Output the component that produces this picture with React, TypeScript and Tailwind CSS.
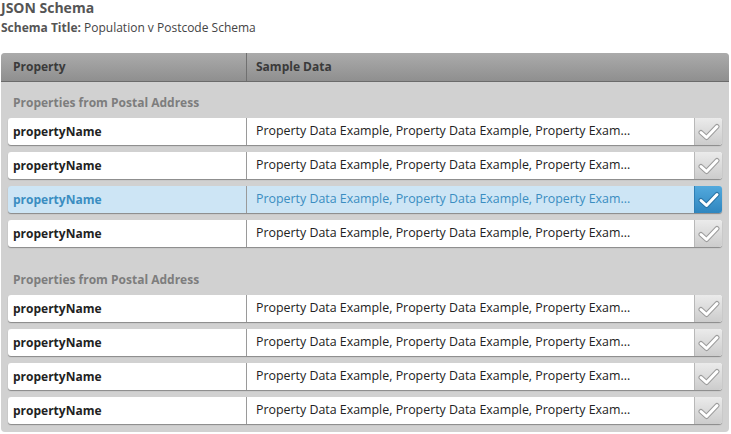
import React from "react";

type Row = { name: string; data: string; selected?: boolean };

const groups: { title: string; rows: Row[] }[] = [
  {
    title: "Properties from Postal Address",
    rows: [
      { name: "propertyName", data: "Property Data Example, Property Data Example, Property Exam..." },
      { name: "propertyName", data: "Property Data Example, Property Data Example, Property Exam..." },
      { name: "propertyName", data: "Property Data Example, Property Data Example, Property Exam...", selected: true },
      { name: "propertyName", data: "Property Data Example, Property Data Example, Property Exam..." },
    ],
  },
  {
    title: "Properties from Postal Address",
    rows: [
      { name: "propertyName", data: "Property Data Example, Property Data Example, Property Exam..." },
      { name: "propertyName", data: "Property Data Example, Property Data Example, Property Exam..." },
      { name: "propertyName", data: "Property Data Example, Property Data Example, Property Exam..." },
      { name: "propertyName", data: "Property Data Example, Property Data Example, Property Exam..." },
    ],
  },
];

function CheckMark({ selected }: { selected?: boolean }) {
  return (
    <svg width="22" height="18" viewBox="0 0 22 18">
      <polyline
        points="3,9.5 8.5,14.5 19,3.5"
        fill="none"
        stroke={selected ? "#2a74a6" : "#9c9c9c"}
        strokeWidth="5"
        strokeLinecap="round"
        strokeLinejoin="round"
      />
      <polyline
        points="3,9.5 8.5,14.5 19,3.5"
        fill="none"
        stroke="#ffffff"
        strokeWidth="3"
        strokeLinecap="round"
        strokeLinejoin="round"
      />
    </svg>
  );
}

export default function App() {
  return (
    <div className="w-[731px] h-[434px] bg-white font-['Open_Sans',sans-serif] overflow-hidden">
      {/* Heading */}
      <div className="pl-[1px]">
        <h1 className="text-[14px] leading-[16px] font-bold text-[#555555]">JSON Schema</h1>
        <p className="mt-[4px] text-[12px] leading-[16px] text-[#444444]">
          <span className="font-bold text-[#555555]">Schema Title:</span> Population v Postcode Schema
        </p>
      </div>

      {/* Table */}
      <div className="ml-[1px] mr-[2px] mt-[17px] rounded-[4px] overflow-hidden bg-[#d1d1d1]">
        <div className="flex h-[29px] bg-gradient-to-b from-[#ababab] to-[#8f8f8f] border-b border-[#6b6b6b] text-[12px] font-bold text-[#3a3a3a]">
          <div className="w-[246px] flex items-center pl-[12px] border-r border-[#707070]">Property</div>
          <div className="flex-1 flex items-center pl-[9px]">Sample Data</div>
        </div>

        <div className="px-[7px] pt-[12px] pb-[8px] flex flex-col gap-[24px]">
          {groups.map((g, gi) => (
            <div key={gi}>
              <div className="h-[18px] flex items-center pl-[5px] text-[12px] font-bold text-[#7d7d7d] mb-[6px]">
                {g.title}
              </div>
              <div className="flex flex-col gap-[7px]">
                {g.rows.map((r, ri) => (
                  <div
                    key={ri}
                    className={`flex h-[27px] rounded-[3px] overflow-hidden shadow-[0_1px_1px_rgba(0,0,0,0.35)] ${
                      r.selected ? "bg-[#cde5f5]" : "bg-white"
                    }`}
                  >
                    <div
                      className={`w-[239px] flex items-center pl-[5px] text-[12px] font-bold border-r border-[#9a9a9a] ${
                        r.selected ? "text-[#3a8dc1]" : "text-[#222222]"
                      }`}
                    >
                      {r.name}
                    </div>
                    <div
                      className={`flex-1 flex items-center pl-[9px] text-[12.4px] ${
                        r.selected ? "text-[#3a8dc1]" : "text-[#222222]"
                      }`}
                    >
                      {r.data}
                    </div>
                    <div
                      className={`w-[28px] flex items-center justify-center border-l ${
                        r.selected
                          ? "bg-gradient-to-b from-[#52a9dd] to-[#2f86bf] border-[#2f7fb4]"
                          : "bg-gradient-to-b from-[#ebebeb] to-[#cccccc] border-[#b8b8b8]"
                      }`}
                    >
                      <CheckMark selected={r.selected} />
                    </div>
                  </div>
                ))}
              </div>
            </div>
          ))}
        </div>
      </div>
    </div>
  );
}
